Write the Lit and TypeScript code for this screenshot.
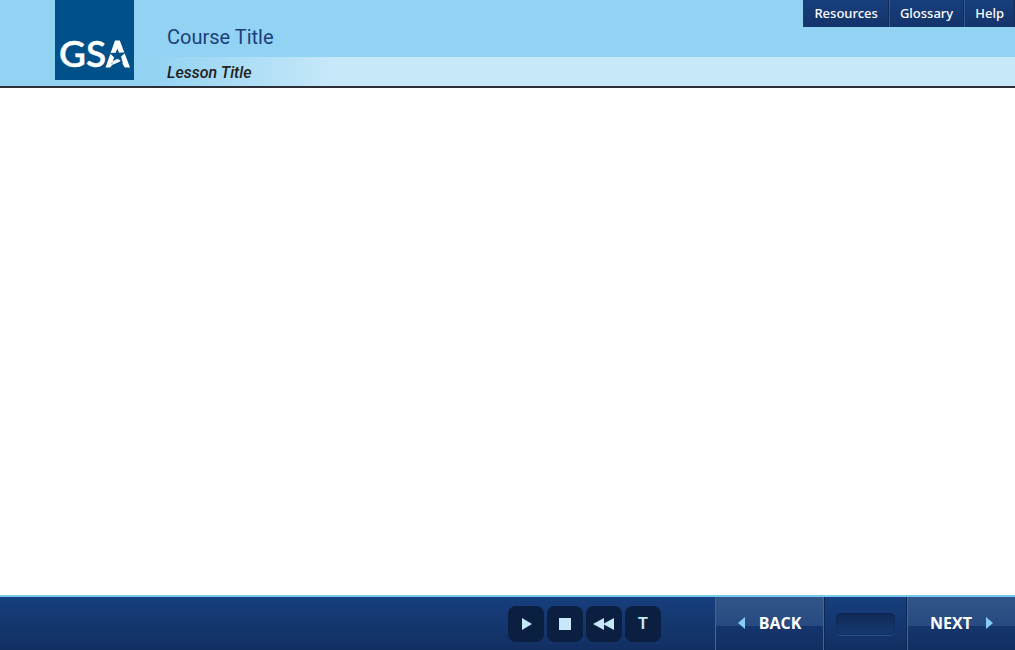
import { LitElement, html, css, svg } from "lit";
import { customElement } from "lit/decorators.js";

@customElement("gsa-logo")
class GsaLogo extends LitElement {
  static styles = css`
    :host { display: block; background: #00508a; }
    .mark { display: block; width: 79px; height: 80px; }
    .letters { font-family: Lato, sans-serif; font-size: 37px; font-weight: 600; fill: #fff; stroke: #fff; stroke-width: 0.4px; }
  `;
  render() {
    return html`<svg class="mark" viewBox="0 0 79 80" role="img" aria-label="GSA">
      <text class="letters" x="4" y="67">G</text>
      <text class="letters" x="31" y="67">S</text>
      ${svg`
        <path fill="#fff" d="M60 40.5h4.8L75 67.5h-5.2L66 61.2l-8.2 3.2L55 67.5h-4.5z"/>
        <path fill="#00508a" d="M62.3 48.5l1.8 4.3 6.9-.6-5 4.4 2 6.8-5.2-3.4-6.6 4.6 3-7-4.6-4.6 6.1-.2z"/>
        <path fill="#fff" d="M56.2 61.8l6.2-3 3.4 1.6-7.6 4z" opacity=".9"/>
      `}
    </svg>`;
  }
}

@customElement("app-root")
class AppRoot extends LitElement {
  static styles = css`
    :host {
      display: flex;
      flex-direction: column;
      min-height: 100vh;
      background: #fff;
      font-family: "Open Sans", "Noto Sans", sans-serif;
    }
    * { box-sizing: border-box; }
    .header {
      display: flex;
      align-items: stretch;
      height: 88px;
      border-bottom: 2px solid #2c3036;
      background:
        linear-gradient(90deg, #92d2f2 150px, #c7e8f9 335px) 0 57px / 100% 29px no-repeat,
        #92d2f2;
    }
    .logo { margin-left: 55px; align-self: flex-start; }
    .titles { flex: 1; padding-left: 33px; font-family: Roboto, sans-serif; }
    .course, .lesson { margin: 0; white-space: nowrap; }
    .course { padding-top: 17px; height: 57px; font-size: 20px; line-height: 40px; font-weight: 400; color: #1a3f7c; }
    .lesson { font-size: 16px; line-height: 32px; font-weight: 500; font-style: italic; color: #222; }
    .links {
      display: flex;
      height: 27px;
      background: linear-gradient(#173f7d, #14346b);
    }
    .link {
      padding: 0 10px;
      border-left: 1px solid #35598f;
      border-right: 1px solid #0f2c5c;
      color: #fff;
      font-family: "Noto Sans", sans-serif;
      font-size: 13px;
      font-weight: 500;
      line-height: 26px;
      text-decoration: none;
    }
    .link:first-child { border-left-color: #173f7d; }
    .content { flex: 1; }
    .footer {
      display: flex;
      justify-content: flex-end;
      height: 55px;
      border-top: 2px solid #77c9ee;
      background: linear-gradient(#173f7d, #122f62);
    }
    button { border: 0; margin: 0; padding: 0; font: inherit; cursor: pointer; }
    .media { display: flex; gap: 3px; padding-top: 9px; margin-right: 54px; }
    .tool {
      display: grid;
      place-items: center;
      width: 36px;
      height: 36px;
      border-radius: 8px;
      background: #0b1f40;
      color: #c7e8f9;
      font-family: "Liberation Sans", sans-serif;
      font-size: 16px;
      font-weight: 700;
    }
    .glyph { display: block; fill: #c7e8f9; }
    .step {
      display: flex;
      align-items: center;
      justify-content: center;
      gap: 14px;
      width: 109px;
      border-left: 1px solid #42679f;
      border-right: 1px solid #42679f;
      background: linear-gradient(#315489, #274a80 29px, #14356c 29px, #122f62);
      color: #fff;
      font-size: 16px;
      line-height: 20px;
      font-weight: 700;
      padding-bottom: 1px;
    }
    .next { width: 108px; border-right: 0; }
    .arrow { display: block; fill: #85cdf2; }
    .pager { width: 83px; padding: 16px 11px 0; border-right: 1px solid #0e2855; border-left: 1px solid #0e2855; }
    .counter {
      display: block;
      height: 22px;
      border-radius: 5px;
      background: linear-gradient(#102a57, #153971);
      box-shadow: inset 0 0 2px #0b2149, 0 1px 0 #28508b;
    }
    .media, .pager, .step { flex: none; }
  `;

  render() {
    return html`
      <header class="header">
        <gsa-logo class="logo"></gsa-logo>
        <div class="titles">
          <h1 class="course">Course Title</h1>
          <h2 class="lesson">Lesson Title</h2>
        </div>
        <nav class="links">
          ${["Resources", "Glossary", "Help"].map((t) => html`<a class="link" href="#">${t}</a>`)}
        </nav>
      </header>
      <main class="content"></main>
      <footer class="footer">
        <div class="media">
          <button class="tool" aria-label="Play">
            <svg class="glyph" width="22" height="14"><path d="M7 1l10 6-10 6z" /></svg>
          </button>
          <button class="tool" aria-label="Stop">
            <svg class="glyph" width="12" height="12"><path d="M0 0h12v12H0z" /></svg>
          </button>
          <button class="tool" aria-label="Rewind">
            <svg class="glyph" width="22" height="14"><path d="M0 7l11-6v12zM10 7l11-6v12z" /></svg>
          </button>
          <button class="tool" aria-label="Transcript">T</button>
        </div>
        <button class="step">
          <svg class="arrow" width="7" height="12"><path d="M7 0v12L0 6z" /></svg>BACK
        </button>
        <div class="pager"><output class="counter" aria-label="Page"></output></div>
        <button class="step next">
          NEXT<svg class="arrow" width="7" height="12"><path d="M0 0v12l7-6z" /></svg>
        </button>
      </footer>
    `;
  }
}
